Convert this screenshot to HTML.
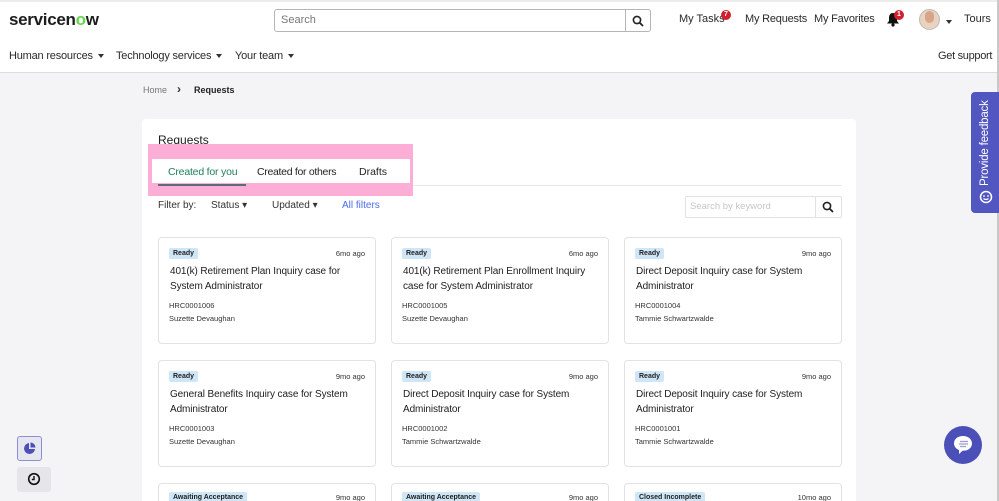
<!DOCTYPE html>
<html><head><meta charset="utf-8">
<style>
*{box-sizing:border-box;margin:0;padding:0}
html,body{width:999px;height:501px;overflow:hidden}
body{font-family:"Liberation Sans",sans-serif;background:#f4f4f7;position:relative;color:#1d1d1d}
.top{position:absolute;left:0;top:0;width:999px;height:73px;background:#fff;border-bottom:1px solid #dcdcdc;border-top:2px solid #ececec}
.abs{position:absolute;white-space:nowrap}
.nav{font-size:11px;color:#2a2a2a}
.caret{display:inline-block;width:0;height:0;border-left:3.5px solid transparent;border-right:3.5px solid transparent;border-top:4px solid #333;margin-left:5px;vertical-align:middle}
.panel{position:absolute;left:142px;top:119px;width:714px;height:382px;background:#fff;border-radius:4px 4px 0 0}
.card{position:absolute;width:218px;height:107px;background:#fff;border:1px solid #e2e2e2;border-radius:4px}
.card.last{height:18px;border-bottom:none;border-radius:4px 4px 0 0}
.badge{position:absolute;left:10px;top:10px;background:#cfe6f7;font-size:7px;font-weight:bold;padding:2px 4px;border-radius:2px;color:#1d1d1d}
.age{position:absolute;right:10px;top:11px;font-size:7.5px;color:#333}
.ttl{position:absolute;left:11px;top:27px;width:205px;font-size:10px;line-height:14.5px;color:#1d1d1d;letter-spacing:-0.1px}
.num{position:absolute;left:10px;top:63px;font-size:7.5px;color:#333}
.who{position:absolute;left:10px;top:76px;font-size:7.5px;color:#333}
</style></head><body>
<div class="top"></div>
<div class="abs" style="left:9px;top:10px;font-size:17px;font-weight:bold;letter-spacing:-0.3px">servicen<span style="color:#62d84e">o</span>w</div>
<div class="abs" style="left:274px;top:9px;width:377px;height:23px;border:1px solid #b5b5b5;border-radius:3px;background:#fff"></div>
<div class="abs" style="left:281px;top:14px;font-size:11px;color:#777">Search</div>
<div class="abs" style="left:625px;top:9px;width:1px;height:23px;background:#b5b5b5"></div>
<svg class="abs" style="left:632px;top:15px" width="12" height="12" viewBox="0 0 12 12"><circle cx="5" cy="5" r="3.6" fill="none" stroke="#222" stroke-width="1.6"/><line x1="7.6" y1="7.6" x2="11" y2="11" stroke="#222" stroke-width="1.8"/></svg>
<div class="abs nav" style="left:679px;top:13px">My Tasks</div>
<div class="abs" style="left:721px;top:10px;width:10px;height:10px;border-radius:5px;background:#d0202f;color:#fff;font-size:7px;text-align:center;line-height:10px;font-weight:bold">7</div>
<div class="abs nav" style="left:745px;top:13px;letter-spacing:-0.2px">My Requests</div>
<div class="abs nav" style="left:814px;top:13px;letter-spacing:-0.2px">My Favorites</div>
<svg class="abs" style="left:886px;top:12px" width="14" height="15" viewBox="0 0 14 15"><path d="M7 1C4 1 3 3.5 3 6v3L1 11.5h12L11 9V6C11 3.5 10 1 7 1z" fill="#111"/><circle cx="7" cy="13" r="1.6" fill="#111"/></svg>
<div class="abs" style="left:894px;top:10px;width:10px;height:10px;border-radius:5px;background:#d0202f;color:#fff;font-size:7px;text-align:center;line-height:10px;font-weight:bold">1</div>
<div class="abs" style="left:919px;top:9px;width:21px;height:21px;border-radius:11px;background:#e9d2c0;border:1px solid #bbb"></div>
<div class="abs" style="left:925px;top:11px;width:9px;height:12px;border-radius:5px;background:#d7a689"></div>
<div class="abs" style="left:941px;top:13px"><span class="caret"></span></div>
<div class="abs nav" style="left:964px;top:13px">Tours</div>
<div class="abs nav" style="left:9px;top:50px;letter-spacing:-0.2px">Human resources<span class="caret"></span></div>
<div class="abs nav" style="left:116px;top:50px;letter-spacing:-0.2px">Technology services<span class="caret"></span></div>
<div class="abs nav" style="left:235px;top:50px;letter-spacing:-0.2px">Your team<span class="caret"></span></div>
<div class="abs nav" style="left:938px;top:50px;letter-spacing:-0.3px">Get support</div>
<div class="abs" style="left:997px;top:0;width:2px;height:501px;background:#c8c8c8"></div>
<div class="abs" style="left:143px;top:85px;font-size:9px;color:#777">Home</div>
<div class="abs" style="left:177px;top:82px;font-size:12px;font-weight:bold;color:#333">&#8250;</div>
<div class="abs" style="left:194px;top:85px;font-size:9px;font-weight:bold;color:#222">Requests</div>
<div class="panel"></div>
<div class="abs" style="left:158px;top:133px;font-size:12px;color:#1d1d1d">Requests</div>
<div class="abs" style="left:148px;top:144px;width:265px;height:52px;background:#fdaed6"></div>
<div class="abs" style="left:152px;top:159px;width:258px;height:24px;background:#fff"></div>
<div class="abs" style="left:413px;top:185px;width:429px;height:1px;background:#e8e8e8"></div>
<div class="abs" style="left:168px;top:166px;font-size:10.5px;color:#1f7f5c;letter-spacing:-0.2px">Created for you</div>
<div class="abs" style="left:158px;top:184px;width:88px;height:2px;background:#5c6b75"></div>
<div class="abs" style="left:257px;top:166px;font-size:10.5px;color:#222;letter-spacing:-0.3px">Created for others</div>
<div class="abs" style="left:359px;top:166px;font-size:10.5px;color:#222">Drafts</div>
<div class="abs" style="left:158px;top:200px;font-size:10px;color:#333">Filter by:</div>
<div class="abs" style="left:211px;top:200px;font-size:10px;color:#333">Status ▾</div>
<div class="abs" style="left:272px;top:200px;font-size:10px;color:#333">Updated ▾</div>
<div class="abs" style="left:342px;top:200px;font-size:10px;color:#4a6cf0">All filters</div>
<div class="abs" style="left:685px;top:196px;width:157px;height:22px;border:1px solid #e2e2e2;border-radius:2px"></div>
<div class="abs" style="left:815px;top:196px;width:1px;height:22px;background:#e2e2e2"></div>
<div class="abs" style="left:690px;top:201px;font-size:9.5px;color:#c6c6c6">Search by keyword</div>
<svg class="abs" style="left:822px;top:201px" width="12" height="12" viewBox="0 0 12 12"><circle cx="5" cy="5" r="3.6" fill="none" stroke="#222" stroke-width="1.6"/><line x1="7.6" y1="7.6" x2="11" y2="11" stroke="#222" stroke-width="1.8"/></svg>

<div class="card" style="left:158px;top:237px"><span class="badge">Ready</span><span class="age">6mo ago</span><div class="ttl">401(k) Retirement Plan Inquiry case for System Administrator</div><div class="num">HRC0001006</div><div class="who">Suzette Devaughan</div></div>
<div class="card" style="left:391px;top:237px"><span class="badge">Ready</span><span class="age">6mo ago</span><div class="ttl">401(k) Retirement Plan Enrollment Inquiry<br>case for System Administrator</div><div class="num">HRC0001005</div><div class="who">Suzette Devaughan</div></div>
<div class="card" style="left:624px;top:237px"><span class="badge">Ready</span><span class="age">9mo ago</span><div class="ttl">Direct Deposit Inquiry case for System Administrator</div><div class="num">HRC0001004</div><div class="who">Tammie Schwartzwalde</div></div>
<div class="card" style="left:158px;top:360px"><span class="badge">Ready</span><span class="age">9mo ago</span><div class="ttl">General Benefits Inquiry case for System Administrator</div><div class="num">HRC0001003</div><div class="who">Suzette Devaughan</div></div>
<div class="card" style="left:391px;top:360px"><span class="badge">Ready</span><span class="age">9mo ago</span><div class="ttl">Direct Deposit Inquiry case for System Administrator</div><div class="num">HRC0001002</div><div class="who">Tammie Schwartzwalde</div></div>
<div class="card" style="left:624px;top:360px"><span class="badge">Ready</span><span class="age">9mo ago</span><div class="ttl">Direct Deposit Inquiry case for System Administrator</div><div class="num">HRC0001001</div><div class="who">Tammie Schwartzwalde</div></div>
<div class="card last" style="left:158px;top:483px"><span class="badge" style="top:8px">Awaiting Acceptance</span><span class="age" style="top:9px">9mo ago</span></div>
<div class="card last" style="left:391px;top:483px"><span class="badge" style="top:8px">Awaiting Acceptance</span><span class="age" style="top:9px">9mo ago</span></div>
<div class="card last" style="left:624px;top:483px"><span class="badge" style="top:8px">Closed Incomplete</span><span class="age" style="top:9px">10mo ago</span></div>

<div class="abs" style="left:971px;top:92px;width:28px;height:121px;background:#5256c0;border-radius:4px 0 0 4px"></div>
<div class="abs" style="left:977px;top:100px;width:16px;height:86px;writing-mode:vertical-rl;transform:rotate(180deg);font-size:11.5px;color:#fff;line-height:16px;letter-spacing:-0.2px">Provide feedback</div>
<svg class="abs" style="left:979px;top:190px" width="14" height="14" viewBox="0 0 14 14"><circle cx="7" cy="7" r="5.5" fill="none" stroke="#fff" stroke-width="1.5"/><circle cx="5" cy="6" r=".9" fill="#fff"/><circle cx="9" cy="6" r=".9" fill="#fff"/><path d="M4.5 8.5Q7 10.5 9.5 8.5" fill="none" stroke="#fff" stroke-width="1.2"/></svg>
<div class="abs" style="left:17px;top:436px;width:25px;height:25px;border:1px solid #8a8fd8;border-radius:3px;background:#e6e6ef"></div>
<svg class="abs" style="left:23px;top:442px" width="13" height="13" viewBox="0 0 13 13"><path d="M6 1A5.5 5.5 0 1 0 12 7H6z" fill="#4b4fb8"/><path d="M7.5 0.5V5.5H12.5A5 5 0 0 0 7.5 .5z" fill="#4b4fb8"/></svg>
<div class="abs" style="left:17px;top:467px;width:34px;height:25px;background:#e6e6ea;border-radius:3px"></div>
<svg class="abs" style="left:27px;top:472px" width="14" height="14" viewBox="0 0 14 14"><circle cx="7" cy="7" r="5.3" fill="none" stroke="#111" stroke-width="1.6"/><path d="M7 4v3.5H4.8" fill="none" stroke="#111" stroke-width="1.4"/></svg>
<div class="abs" style="left:944px;top:426px;width:38px;height:38px;border-radius:19px;background:#4b4fb8"></div>
<svg class="abs" style="left:951px;top:433px" width="24" height="24" viewBox="0 0 24 24"><path d="M12 3C6.5 3 3 6.3 3 10.5c0 3 2 5.3 5 6.5v4l3.5-3.2H12c5.5 0 9-3.2 9-7.3S17.5 3 12 3z" fill="#fff"/><line x1="9" y1="8.5" x2="17" y2="8.5" stroke="#9aa0c8" stroke-width="1.3"/><line x1="8" y1="11" x2="17" y2="11" stroke="#9aa0c8" stroke-width="1.3"/><line x1="9" y1="13.5" x2="15" y2="13.5" stroke="#9aa0c8" stroke-width="1.3"/></svg>
</body></html>
